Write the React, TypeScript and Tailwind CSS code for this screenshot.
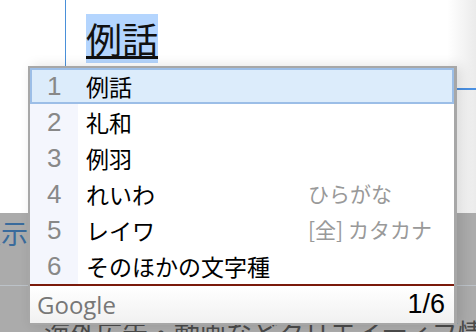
const rows = [
  { n: "1", text: "例話", hint: "" },
  { n: "2", text: "礼和", hint: "" },
  { n: "3", text: "例羽", hint: "" },
  { n: "4", text: "れいわ", hint: "ひらがな" },
  { n: "5", text: "レイワ", hint: "[全] カタカナ" },
  { n: "6", text: "そのほかの文字種", hint: "" },
];

const jp = "font-['Noto_Sans_CJK_JP',sans-serif]";

export default function App() {
  return (
    <main className="relative h-[332px] w-[476px] overflow-hidden bg-white">
      {/* editor area */}
      <section className="h-[213px] bg-gradient-to-r from-white from-[94%] to-[#ebebeb]">
        <div className="ml-[65px] h-full border-l border-[#4a90d9]">
          <div className="flex h-[88px] flex-col pl-[20px] pt-[14px]">
            <span
              className={`${jp} w-fit bg-[#b4d5fe] text-[36px] leading-[49px] text-[#111] underline decoration-[3px] underline-offset-[2px]`}
            >
              例話
            </span>
          </div>
          <div className="h-[2px] bg-[#4a90e2]" />
        </div>
      </section>

      {/* dimmed page below */}
      <section className="h-[119px] bg-[#ababab]">
        <div className="h-[72px] overflow-hidden pt-[2px]">
          <span className={`${jp} ml-[-26px] text-[27px] leading-[36px] text-[#3a6b9c]`}>
            表示
          </span>
        </div>
        <div className="h-px bg-[#bcc2c8]" />
        <p
          className={`${jp} mt-[29px] whitespace-nowrap pl-[44px] text-[26px] leading-[34px] text-[#4a4a4a]`}
        >
          海外広告・動画などクリエイティブ情報
        </p>
      </section>

      {/* candidate window */}
      <div className="absolute left-[28px] top-[66px] w-[429px] border-2 border-r-[3px] border-[#a7a7a7] bg-white shadow-[4px_0_12px_rgba(0,0,0,0.12)]">
        {rows.map((r, i) =>
          i === 0 ? (
            <div
              key={r.n}
              className="flex h-[36px] items-center border-2 border-[#9cbee7] bg-[#dcecfb]"
            >
              <span className="w-[46px] pl-[15px] font-['Liberation_Sans',sans-serif] text-[26px] text-[#888]">
                {r.n}
              </span>
              <span className={`${jp} flex-1 pl-[8px] text-[23px] text-black`}>{r.text}</span>
            </div>
          ) : (
            <div key={r.n} className="flex h-[36px] items-center">
              <span className="flex h-full w-[48px] items-center bg-[#f4f6fd] pl-[17px] font-['Liberation_Sans',sans-serif] text-[26px] text-[#888]">
                {r.n}
              </span>
              <span className={`${jp} flex-1 pl-[8px] text-[23px] text-black`}>{r.text}</span>
              {r.hint ? (
                <span className={`${jp} w-[146px] text-[21px] text-[#999]`}>{r.hint}</span>
              ) : null}
            </div>
          )
        )}
        <div className="flex h-[39px] items-center justify-between border-t-2 border-[#7a1a0b] bg-gradient-to-b from-white to-[#f1f1f1] pl-[7px] pr-[9px]">
          <span className="font-['Open_Sans',sans-serif] text-[24px] leading-none text-[#777]">
            Google
          </span>
          <span className="font-['Liberation_Sans',sans-serif] text-[27px] leading-none text-black">
            1/6
          </span>
        </div>
      </div>
    </main>
  );
}
